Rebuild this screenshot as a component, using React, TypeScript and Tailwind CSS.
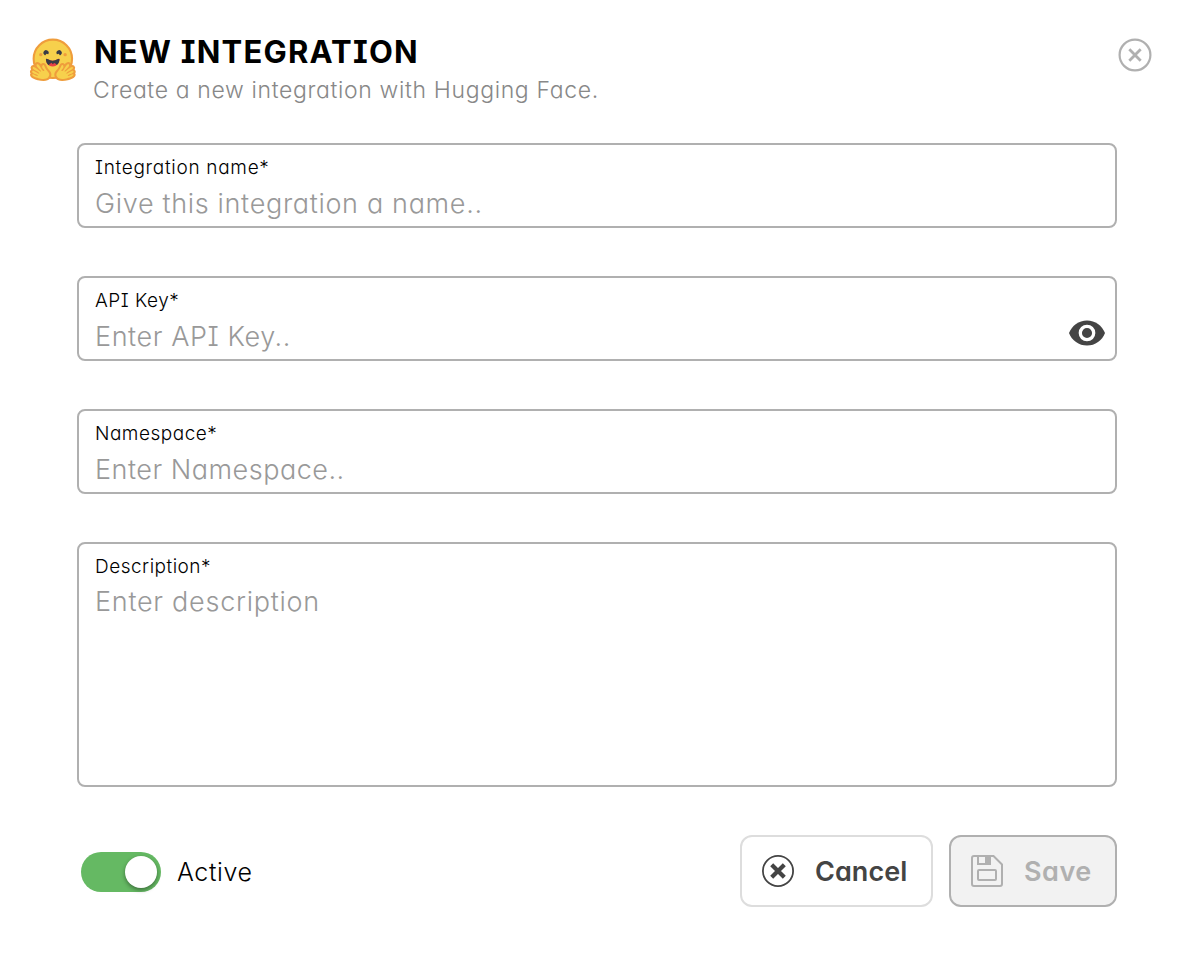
import React, { useState } from "react";

function Hand() {
  return (
    <>
      <path
        fill="#EF9D3C"
        d="M17.52 48c-1.62 0-3.06.66-4.07 1.87a5.97 5.97 0 0 0-1.33 3.76 7.1 7.1 0 0 0-1.94-.3c-1.55 0-2.95.59-3.94 1.66a5.8 5.8 0 0 0-.8 7 5.3 5.3 0 0 0-1.79 2.82c-.24.9-.48 2.8.8 4.74a5.22 5.22 0 0 0-.37 5.02c1.02 2.32 3.57 4.14 8.52 6.1 3.07 1.22 5.89 2 5.91 2.01a44.33 44.33 0 0 0 10.93 1.6c5.86 0 10.05-1.8 12.46-5.34 3.88-5.69 3.33-10.9-1.7-15.92-2.77-2.78-4.62-6.87-5-7.77-.78-2.66-2.84-5.62-6.25-5.62a5.7 5.7 0 0 0-4.6 2.46c-1-1.26-1.98-2.25-2.86-2.82A7.4 7.4 0 0 0 17.52 48Z"
      />
      <path
        fill="#F7D04C"
        d="M38.6 76.69c2.75-4.04 2.55-7.07-1.22-10.84-3.78-3.77-5.98-9.3-5.98-9.3s-.82-3.2-2.69-2.9c-1.87.3-3.24 5.08.68 8.01 3.91 2.93-.78 4.92-2.29 2.17-1.5-2.75-5.62-9.82-7.76-11.18-2.13-1.35-3.63-.6-3.13 2.2.5 2.79 9.43 9.55 8.56 11-.87 1.47-3.93-1.71-3.93-1.71s-9.57-8.71-11.66-6.44c-2.08 2.27 1.59 4.17 6.8 7.33 5.23 3.16 5.64 4 4.9 5.2-.75 1.2-12.28-8.53-13.36-4.4-1.08 4.11 11.77 5.3 10.98 8.15-.8 2.85-9.06-5.38-10.74-2.18-1.7 3.21 11.65 6.98 11.76 7.01 4.3 1.12 15.25 3.49 19.08-2.12Z"
      />
    </>
  );
}

function HuggingFaceLogo() {
  return (
    <svg viewBox="0 0 95 88" className="mt-px h-[46px] w-[50px] shrink-0" aria-hidden="true">
      <circle cx="47.21" cy="41.75" r="36.75" fill="#F7D04C" stroke="#EF9D3C" strokeWidth="4" />
      <path
        fill="#3A3B45"
        d="M58.5 32.3c1.28.44 1.78 3.06 3.07 2.38a5 5 0 1 0-6.76-2.07c.61 1.15 2.55-.72 3.7-.32ZM34.95 32.3c-1.28.44-1.79 3.06-3.07 2.38a5 5 0 1 1 6.76-2.07c-.61 1.15-2.56-.72-3.7-.32Z"
      />
      <path
        fill="#EB3F46"
        d="M46.96 56.29c9.83 0 13-8.76 13-13.26 0-2.34-1.57-1.6-4.09-.36-2.33 1.15-5.46 2.74-8.9 2.74-7.19 0-13-6.88-13-2.38s3.16 13.26 13 13.26Z"
      />
      <path
        fill="#3A3B45"
        d="M39.43 54a8.7 8.7 0 0 1 5.3-4.49c.4-.12.81.57 1.24 1.28.4.68.82 1.37 1.24 1.37.45 0 .9-.68 1.33-1.35.45-.7.89-1.38 1.32-1.25a8.61 8.61 0 0 1 5 4.17c3.73-2.94 5.1-7.74 5.1-10.7 0-2.34-1.57-1.6-4.09-.36l-.14.07c-2.31 1.15-5.39 2.67-8.77 2.67s-6.45-1.52-8.77-2.67c-2.6-1.29-4.23-2.1-4.23.29 0 3.05 1.46 8.06 5.47 10.97Z"
      />
      <circle cx="70.71" cy="33.75" r="3.25" fill="#EF9D3C" />
      <circle cx="24.21" cy="33.75" r="3.25" fill="#EF9D3C" />
      <Hand />
      <g transform="translate(94.4 0) scale(-1 1)">
        <Hand />
      </g>
    </svg>
  );
}

function CloseIcon() {
  return (
    <svg viewBox="0 0 34 34" className="size-[34px]" fill="none" stroke="#B0B0B0" aria-hidden="true">
      <circle cx="17" cy="17" r="15.4" strokeWidth="2.2" />
      <path d="M11.3 11.3 22.7 22.7M22.7 11.3 11.3 22.7" strokeWidth="2.8" />
    </svg>
  );
}

function EyeIcon() {
  return (
    <svg viewBox="0 0 36 26" className="h-[26px] w-9" aria-hidden="true">
      <path
        fill="#444444"
        d="M18 .4C9.8.4 2.9 5.5 0 13c2.9 7.5 9.8 12.6 18 12.6S33.1 20.5 36 13C33.1 5.5 26.2.4 18 .4Z"
      />
      <circle cx="18" cy="13" r="6.7" fill="#444444" stroke="#fff" strokeWidth="3.3" />
    </svg>
  );
}

function CancelIcon() {
  return (
    <svg viewBox="0 0 32 32" className="size-8" fill="none" stroke="#444444" aria-hidden="true">
      <circle cx="16" cy="16" r="15.1" strokeWidth="1.8" />
      <path d="M9.7 9.7 22.3 22.3M22.3 9.7 9.7 22.3" strokeWidth="4.2" />
    </svg>
  );
}

function SaveIcon() {
  return (
    <svg viewBox="0 0 32 32" className="size-8" fill="none" stroke="#B0B0B0" strokeWidth="2" aria-hidden="true">
      <path d="M3 1h19.5L31 9.5V29a2 2 0 0 1-2 2H3a2 2 0 0 1-2-2V3a2 2 0 0 1 2-2Z" />
      <path d="M7 1v8h12V1" />
      <path d="M14 1h5v8h-5Z" fill="#B0B0B0" stroke="none" />
      <rect x="7" y="15" width="18" height="10" rx="1" />
    </svg>
  );
}

const box = "block rounded-lg border-2 border-[#B0B0B0] bg-white px-4";
const labelText = "block h-6 text-[19px] leading-6 text-black";
const control =
  "block min-w-0 flex-1 resize-none bg-transparent p-0 font-light text-[#444444] outline-none placeholder:text-[#999999] placeholder:opacity-100";

function Field({
  label,
  placeholder,
  labelSpacing,
  spacing,
  type = "text",
  action,
}: {
  label: string;
  placeholder: string;
  labelSpacing: string;
  spacing: string;
  type?: string;
  action?: React.ReactNode;
}) {
  return (
    <label className={`${box} h-[85px] pt-[11px]`}>
      <span className={`${labelText} ${labelSpacing}`}>{label}</span>
      <span className="-mt-px flex h-12 items-center">
        <input type={type} placeholder={placeholder} className={`${control} h-12 text-[27px] ${spacing}`} />
        {action}
      </span>
    </label>
  );
}

export default function App() {
  const [active, setActive] = useState(true);
  const [showKey, setShowKey] = useState(false);

  return (
    <main className="h-[972px] w-[1182px] bg-white font-['Inter',sans-serif] font-light [font-feature-settings:'cv11','cv08']">
      <header className="flex h-[143px] items-start pr-[30px] pl-7 pt-9">
        <HuggingFaceLogo />
        <div className="ml-[15px] flex-1">
          <h1 className="ml-px h-8 text-[31px] leading-8 font-bold tracking-[1.2px] whitespace-nowrap text-black">NEW INTEGRATION</h1>
          <p className="mt-[6px] h-8 text-[23px] leading-8 tracking-[0.64px] whitespace-nowrap text-[#888888]">
            Create a new integration with Hugging Face.
          </p>
        </div>
        <button type="button" aria-label="Close" className="mt-[2px]">
          <CloseIcon />
        </button>
      </header>

      <form className="mr-[65px] ml-[77px]" onSubmit={(e) => e.preventDefault()}>
        <div className="flex flex-col gap-12">
          <Field label="Integration name*" placeholder="Give this integration a name.." labelSpacing="tracking-[0.7px]" spacing="tracking-[0.67px]" />
          <Field
            label="API Key*"
            placeholder="Enter API Key.."
            labelSpacing="tracking-[0.5px]"
            spacing="tracking-[0.57px]"
            type={showKey ? "text" : "password"}
            action={
              <button type="button" aria-label="Show key" className="-mr-[6px] mb-[6px]" onClick={() => setShowKey(!showKey)}>
                <EyeIcon />
              </button>
            }
          />
          <Field label="Namespace*" placeholder="Enter Namespace.." labelSpacing="tracking-[0.5px]" spacing="tracking-[0.5px]" />
          <label className={`${box} h-[245px] pt-[11px]`}>
            <span className={`${labelText} tracking-[0.5px]`}>Description*</span>
            <textarea placeholder="Enter description" className={`${control} mt-[5px] h-[190px] w-full text-[27px] leading-9 tracking-[0.73px]`} />
          </label>
        </div>

        <div className="mt-12 flex h-[72px] items-center">
          <button
            type="button"
            role="switch"
            aria-checked={active}
            aria-label="Active"
            onClick={() => setActive(!active)}
            className={`mt-[2px] ml-1 flex h-10 w-20 items-center rounded-full px-1 ${active ? "justify-end bg-[#65B963]" : "justify-start bg-[#B0B0B0]"}`}
          >
            <span className="size-8 rounded-full bg-white shadow-[0_2px_4px_rgba(0,0,0,0.4)]" />
          </button>
          <span className="mt-[2px] ml-4 text-[25px] leading-8 tracking-[0.6px] text-black">Active</span>
          <div className="ml-auto flex gap-4">
            <button
              type="button"
              className="flex h-[72px] w-[193px] items-center rounded-xl border-2 border-[#DDDDDD] bg-white pl-5 text-[27px] font-semibold text-[#444444]"
            >
              <CancelIcon />
              <span className="mt-[2px] ml-[21px] tracking-[0.05px]">Cancel</span>
            </button>
            <button
              type="submit"
              disabled
              className="flex h-[72px] w-[168px] items-center rounded-xl border-2 border-[#B0B0B0] bg-[#F2F2F2] pl-5 text-[27px] font-semibold text-[#B0B0B0]"
            >
              <SaveIcon />
              <span className="mt-[2px] ml-[21px] tracking-[0.5px]">Save</span>
            </button>
          </div>
        </div>
      </form>
    </main>
  );
}
